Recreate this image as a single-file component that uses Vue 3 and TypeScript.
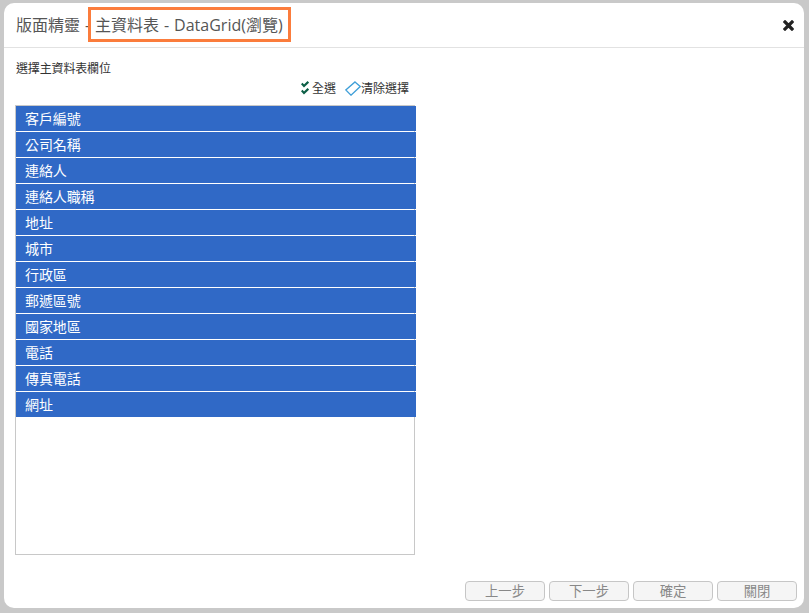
<script setup lang="ts">
const fields: string[] = ['客戶編號','公司名稱','連絡人','連絡人職稱','地址','城市','行政區','郵遞區號','國家地區','電話','傳真電話','網址']
const buttons: string[] = ['上一步','下一步','確定','關閉']
</script>

<template>
  <div class="page">
    <div class="dialog">
      <header class="head">
        <h1 class="title">版面精靈 - 主資料表 - DataGrid(瀏覽)</h1>
        <span class="mark"></span>
        <svg class="close" width="11" height="11" viewBox="0 0 11 11"><path d="M2 2l7 7M9 2l-7 7" stroke="#222" stroke-width="3.2" stroke-linecap="square" fill="none"/></svg>
      </header>
      <main class="body">
        <div class="panel">
          <div class="label">選擇主資料表欄位</div>
          <div class="tools">
            <span class="tool">
              <svg width="8" height="14" viewBox="0 0 8 14"><path d="M.7 2.5l2.3 2.5L7.3.8M.7 9.5L3 12l4.3-4.2" stroke="#0c5f46" stroke-width="2.2" fill="none"/></svg>
              全選
            </span>
            <span class="tool tool2">
              <svg width="16" height="15" viewBox="0 0 16 15"><path d="M10 .9l5.2 4.6L6 14.2.8 9z" stroke="#3f9fd8" stroke-width="1.3" fill="#fff"/></svg>
              清除選擇
            </span>
          </div>
          <ul class="list">
            <li v-for="f in fields" :key="f" class="row">{{ f }}</li>
          </ul>
        </div>
      </main>
      <footer class="foot">
        <button v-for="b in buttons" :key="b" class="btn" type="button">{{ b }}</button>
      </footer>
    </div>
  </div>
</template>

<style scoped>
.page { width: 809px; height: 613px; box-sizing: border-box; padding: 3px 5px 5px 4px; background: #c9c9c9; font-family: "Open Sans", "Noto Sans CJK TC", sans-serif; }
.dialog { height: 100%; background: #fff; border-radius: 10px; display: flex; flex-direction: column; overflow: hidden; }
.head { position: relative; height: 44px; flex: none; border-bottom: 1px solid #e2e2e2; display: flex; align-items: center; justify-content: space-between; padding: 0 10px 0 12px; }
.title { margin: 0; font-size: 16px; font-weight: 400; color: #555; line-height: 44px; white-space: nowrap; word-spacing: 0.8px; }
.mark { position: absolute; left: 84px; top: 4px; width: 203px; height: 35px; box-sizing: border-box; border: 3px solid #fb7c3c; }
.body { flex: 1; padding: 12px 11px 0; }
.panel { width: 400px; }
.label { font-size: 12px; line-height: 18px; color: #333; height: 18px; padding-left: 1px; letter-spacing: -0.15px; }
.tools { display: flex; justify-content: flex-end; align-items: center; height: 18px; font-size: 12px; color: #333; margin-right: 6px; margin-top: 1px; }
.tool { display: inline-flex; align-items: center; gap: 3px; }
.tool2 { margin-left: 9px; gap: 0; }
.list { list-style: none; margin: 8px 0 0; padding: 0; height: 450px; box-sizing: border-box; border: 1px solid #c8c8c8; }
.row { height: 25px; margin: 0 -2px 1px 0; background: #3069c6; color: #fff; font-size: 14px; line-height: 26px; padding-left: 9px; letter-spacing: -0.1px; }
.foot { flex: none; display: flex; justify-content: flex-end; gap: 4px; padding: 0 7px 7px 0; }
.btn { display: flex; align-items: center; justify-content: center; width: 80px; height: 20px; box-sizing: border-box; padding: 0 0 1px; border: 1px solid #c6c6c6; border-radius: 4px; background: #f5f5f5; color: #888; font: 13.33px/16px "Open Sans", "Noto Sans CJK TC", sans-serif; }
</style>
